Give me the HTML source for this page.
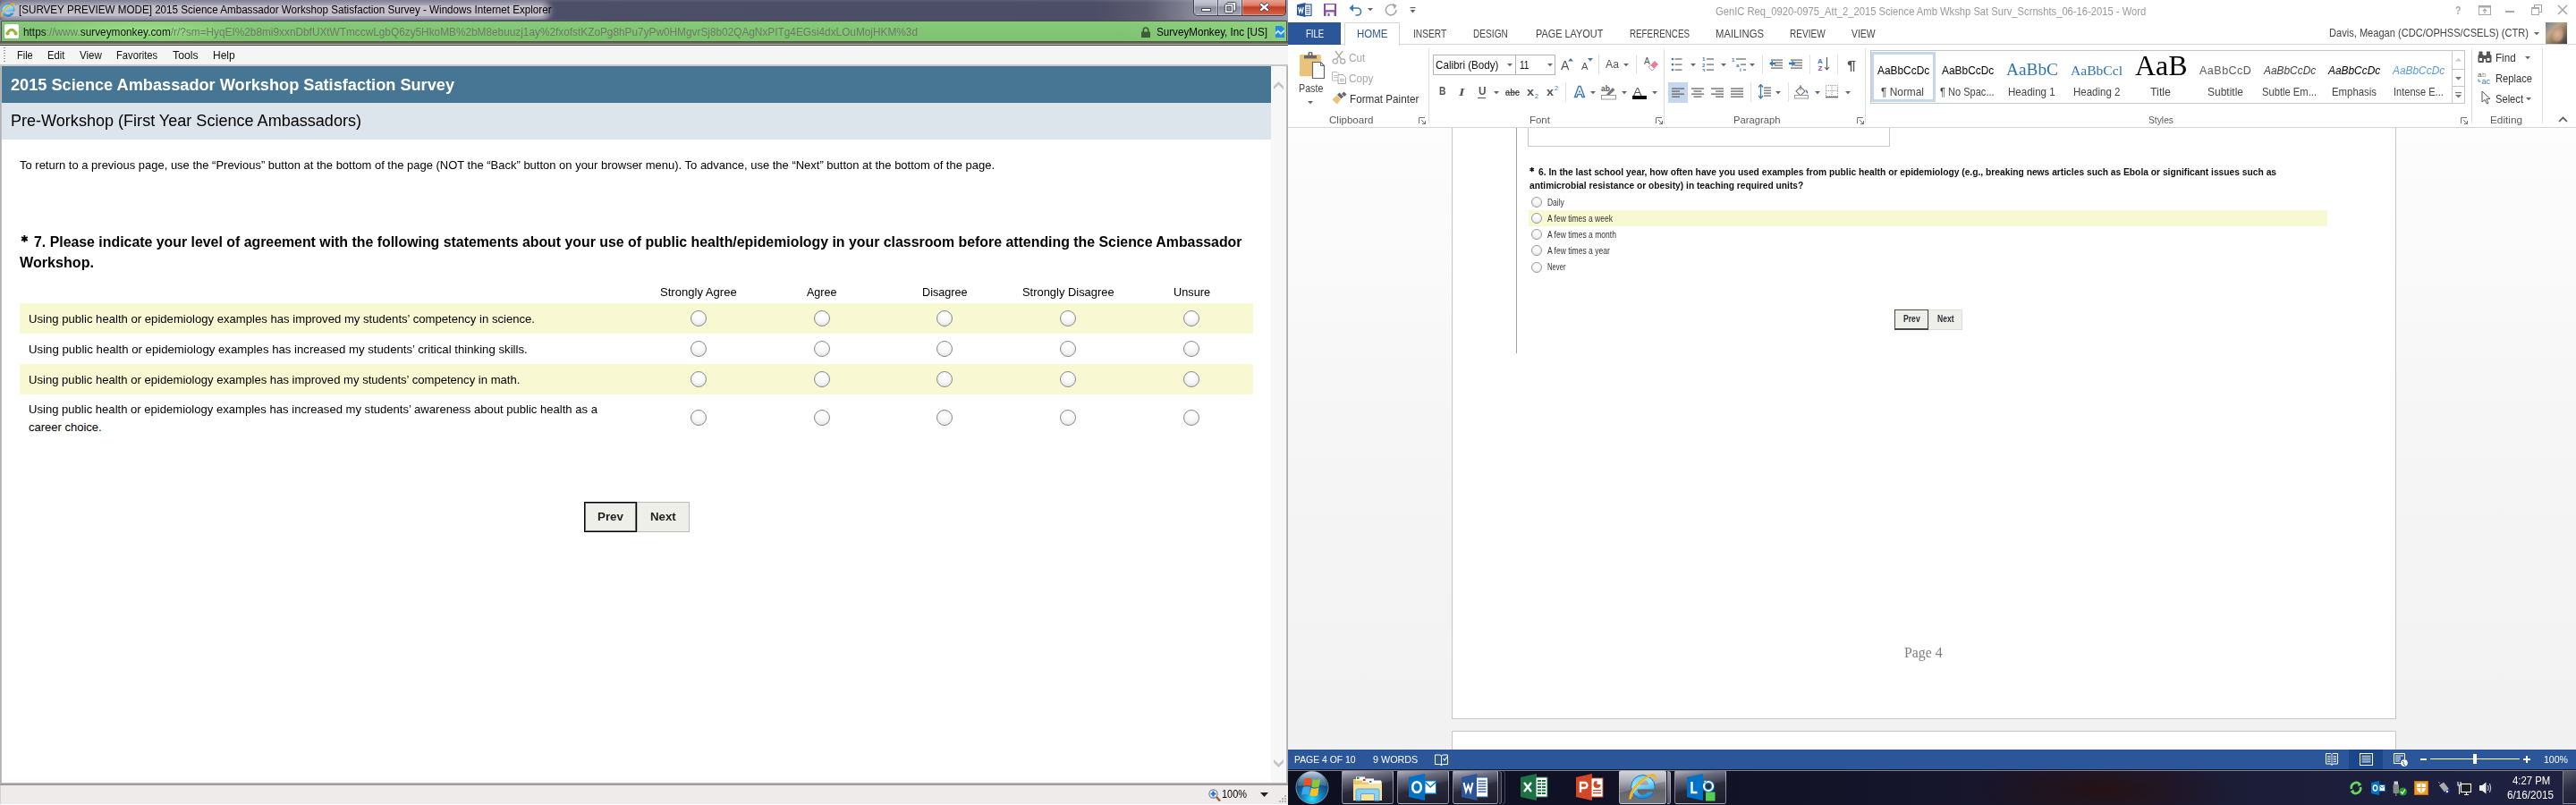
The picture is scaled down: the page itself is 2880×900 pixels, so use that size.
<!DOCTYPE html>
<html><head><meta charset="utf-8">
<style>
*{box-sizing:border-box}
html,body{margin:0;padding:0}
body{width:2880px;height:900px;position:relative;overflow:hidden;background:#fff;font-family:"Liberation Sans",sans-serif;color:#000}
.a{position:absolute}
.t{position:absolute;white-space:pre;line-height:1}

</style></head>
<body>
<div class="a" style="left:0px;top:0px;width:1440px;height:900px;background:#fff"></div>
<div class="a" style="left:0px;top:0px;width:1440px;height:24px;background:linear-gradient(90deg,#4d4e67 0,#4c4d66 85%,#5a5b70 89%,#8c8c9c 93%,#9a9aa8 100%)"></div>
<div class="a" style="left:0px;top:0px;width:1440px;height:3px;background:linear-gradient(180deg,rgba(255,255,255,0.10),rgba(255,255,255,0))"></div>
<div class="a" style="left:2px;top:6px;width:608px;height:12px;background:#c3c0ca;border-radius:6px;box-shadow:0 0 7px 5px #b3b0c0"></div>
<svg class="a" style="left:0px;top:3px;" width="17" height="17" viewBox="0 0 32 32"><defs><linearGradient id="ieti" x1="0" y1="0" x2="0.3" y2="1"><stop offset="0" stop-color="#5cc8f5"/><stop offset="0.45" stop-color="#8fe6ff"/><stop offset="1" stop-color="#1e8ed8"/></linearGradient>
<mask id="ietim"><rect width="32" height="32" fill="#fff"/><path d="M10.6 13.4 A6.3 5.8 0 0 1 23.2 13.4Z" fill="#000"/><path d="M10.6 18.3 H32 V21.6 H22.5 A6.3 5.2 0 0 1 10.6 18.3Z" fill="#000"/></mask></defs>
<g mask="url(#ietim)"><circle cx="16.9" cy="15.8" r="13.2" fill="url(#ieti)" stroke="#1669b8" stroke-width="0.9"/></g>
<path d="M2.8 29.5 C1.5 23 11 9.5 23.5 3.6 C28 1.5 31.5 1.8 29.6 7.2" fill="none" stroke="#f6b31b" stroke-width="2.6"/>
<path d="M4.5 27 C5 22 12 12 22 6" fill="none" stroke="#ffe27a" stroke-width="0.9" opacity="0.8"/></svg>
<div class="t" style="left:21.00px;top:5.42px;font-family:'Liberation Sans';font-size:12.5px;color:#000;font-weight:normal;transform:scaleX(0.9307);transform-origin:0 0;">[SURVEY PREVIEW MODE] 2015 Science Ambassador Workshop Satisfaction Survey - Windows Internet Explorer</div>
<div class="a" style="left:1334px;top:-3px;width:104px;height:21px;border:1px solid #3c3e52;border-top:none;border-radius:0 0 5px 5px;overflow:hidden;background:#555">
    <div class="a" style="left:0;top:0;width:27px;height:20px;background:linear-gradient(180deg,#cfd0da 0,#b4b5c4 45%,#8c8e9f 55%,#a4a6b4 100%);border-right:1px solid #4a4c5e;box-shadow:inset 0 0 0 1px rgba(255,255,255,0.35)"></div>
    <div class="a" style="left:27px;top:0;width:27px;height:20px;background:linear-gradient(180deg,#cfd0da 0,#b4b5c4 45%,#8c8e9f 55%,#a4a6b4 100%);border-right:1px solid #4a4c5e;box-shadow:inset 0 0 0 1px rgba(255,255,255,0.35)"></div>
    <div class="a" style="left:54px;top:0;width:49px;height:20px;background:linear-gradient(180deg,#eeb2a4 0,#dd7c67 45%,#c23d22 55%,#d5674b 100%);box-shadow:inset 0 0 0 1px rgba(255,255,255,0.3)"></div>
    </div>
<div class="a" style="left:1343px;top:9px;width:11px;height:4px;background:#fff;border:1px solid #4a4a58"></div>
<svg class="a" style="left:1368px;top:1px;" width="15" height="15" viewBox="0 0 15 15"><rect x="3.8" y="1.5" width="10" height="9.5" rx="1" fill="#fff" stroke="#3e4256" stroke-width="1"/><rect x="1.3" y="3.8" width="9.5" height="9.8" rx="1" fill="#fafafa" stroke="#3e4256" stroke-width="1"/><rect x="3.9" y="6.4" width="4.3" height="4.5" fill="#a09a9a" stroke="#3e4256" stroke-width="1"/></svg>
<svg class="a" style="left:1407px;top:2px;" width="13" height="12" viewBox="0 0 13 12"><path d="M2 2 L11 10 M11 2 L2 10" stroke="#3e4256" stroke-width="4"/><path d="M2.3 2.3 L10.7 9.7 M10.7 2.3 L2.3 9.7" stroke="#fff" stroke-width="2.4"/></svg>
<div class="a" style="left:0px;top:22px;width:1440px;height:28px;background:linear-gradient(90deg,#8e8c9c 0,#6d6c80 25%,#4a4b63 50%,#4a4b63 85%,#8d8e9e 100%)"></div>
<div class="a" style="left:1px;top:23px;width:1438px;height:24px;background:#566050;border:1px solid #4a5248;border-radius:1px"></div>
<div class="a" style="left:2px;top:24px;width:1436px;height:22px;background:linear-gradient(180deg,#86c978 0,#7ec270 100%)"></div>
<div class="a" style="left:40px;top:24px;width:240px;height:22px;background:radial-gradient(ellipse 120px 16px at 50% 50%,rgba(160,225,140,0.9),rgba(160,225,140,0))"></div>
<div class="a" style="left:1250px;top:24px;width:188px;height:22px;background:linear-gradient(90deg,rgba(150,215,130,0) 0,rgba(150,215,130,0.6) 100%)"></div>
<div class="a" style="left:0px;top:46px;width:1440px;height:3px;background:linear-gradient(180deg,#4a5042 0,#5e6252 40%,#6a6c5c 100%)"></div>
<div class="a" style="left:0px;top:49px;width:1440px;height:1px;background:#bdbdb5"></div>
<div class="a" style="left:0px;top:50px;width:1440px;height:1px;background:#3a3a3a"></div>
<div class="a" style="left:5px;top:27px;width:16px;height:16px;background:#fff;border-radius:2px;box-shadow:0 0 1px #999"></div>
<svg class="a" style="left:6px;top:29px;" width="14" height="12" viewBox="0 0 14 12"><path d="M2 8.5 Q7 0 12 8.5" fill="none" stroke="#98b43a" stroke-width="2.8"/><circle cx="2.4" cy="8.6" r="2" fill="#98b43a"/><circle cx="11.6" cy="8.6" r="2" fill="#98b43a"/></svg>
<div class="t" style="left:26.00px;top:30.32px;font-family:'Liberation Sans';font-size:12.5px;color:#6b7a66;font-weight:normal;transform:scaleX(0.9462);transform-origin:0 0;"><span style="color:#111">https</span>://www.<span style="color:#111">surveymonkey.com</span>/r/?sm=HyqEI%2b8mi9xxnDbfUXtWTmccwLgbQ6zy5HkoMB%2bM8ebuuzj1ay%2fxofstKZoPg8hPu7yPw0HMgvrSj8b02QAgNxPITg4EGsi4dxLOuMojHKM%3d</div>
<svg class="a" style="left:1276px;top:30px;" width="10" height="12" viewBox="0 0 10 12"><path d="M2.3 6 V3.7 A2.7 2.7 0 0 1 7.7 3.7 V6" fill="none" stroke="#3e5c38" stroke-width="1.7"/><rect x="0" y="5.5" width="10" height="6.5" fill="#3e5c38"/></svg>
<div class="t" style="left:1293.00px;top:30.32px;font-family:'Liberation Sans';font-size:12.5px;color:#000;font-weight:normal;transform:scaleX(0.9312);transform-origin:0 0;">SurveyMonkey, Inc [US]</div>
<svg class="a" style="left:1426px;top:29px;" width="10" height="13" viewBox="0 0 10 13"><path d="M0 0 H7 L10 3 V13 H0 Z" fill="#2a8ae0"/><path d="M0 7 L3 4.5 L6 7.5 L10 4 V6.5 L6 10 L3 7 L0 9.5Z" fill="#cfe8ff"/></svg>
<div class="a" style="left:0px;top:51px;width:1440px;height:22px;background:#f5f5f5"></div>
<div class="a" style="left:0px;top:72px;width:1440px;height:2px;background:#c8c8c8"></div>
<div class="a" style="left:4px;top:53px;width:2px;height:18px;background:repeating-linear-gradient(180deg,#9a9a9a 0,#9a9a9a 1px,transparent 1px,transparent 3px)"></div>
<div class="t" style="left:19.30px;top:55.84px;font-family:'Liberation Sans';font-size:12px;color:#111;font-weight:normal;transform:scaleX(0.9150);transform-origin:0 0;">File</div>
<div class="t" style="left:53.40px;top:55.84px;font-family:'Liberation Sans';font-size:12px;color:#111;font-weight:normal;transform:scaleX(0.9329);transform-origin:0 0;">Edit</div>
<div class="t" style="left:88.80px;top:55.84px;font-family:'Liberation Sans';font-size:12px;color:#111;font-weight:normal;transform:scaleX(0.9652);transform-origin:0 0;">View</div>
<div class="t" style="left:130.40px;top:55.84px;font-family:'Liberation Sans';font-size:12px;color:#111;font-weight:normal;transform:scaleX(0.9360);transform-origin:0 0;">Favorites</div>
<div class="t" style="left:193.00px;top:55.84px;font-family:'Liberation Sans';font-size:12px;color:#111;font-weight:normal;transform:scaleX(1.0244);transform-origin:0 0;">Tools</div>
<div class="t" style="left:238.00px;top:55.84px;font-family:'Liberation Sans';font-size:12px;color:#111;font-weight:normal;transform:scaleX(1.0005);transform-origin:0 0;">Help</div>
<div class="a" style="left:0px;top:74px;width:2px;height:804px;background:linear-gradient(90deg,#a9a9a9,#c7c7c7)"></div>
<div class="a" style="left:1438px;top:74px;width:2px;height:804px;background:linear-gradient(90deg,#c7c7c7,#a9a9a9)"></div>
<div class="a" style="left:0px;top:875px;width:1440px;height:3px;background:linear-gradient(180deg,#c0c0c0,#8e8e8e)"></div>
<div class="a" style="left:1421px;top:74px;width:17px;height:801px;background:#f7f7f7"></div>
<svg class="a" style="left:1424px;top:91px;" width="11" height="9" viewBox="0 0 11 9"><path d="M5.5 0 L11 5.5 V9 L5.5 3.8 L0 9 V5.5Z" fill="#c4c4c4"/></svg>
<svg class="a" style="left:1424px;top:849px;" width="11" height="9" viewBox="0 0 11 9"><path d="M5.5 9 L11 3.5 V0 L5.5 5.2 L0 0 V3.5Z" fill="#c4c4c4"/></svg>
<div class="a" style="left:2px;top:74px;width:1419px;height:41px;background:#467694"></div>
<div class="t" style="left:12.00px;top:85.76px;font-family:'Liberation Sans';font-size:18px;color:#fff;font-weight:bold;transform:scaleX(1.0098);transform-origin:0 0;">2015 Science Ambassador Workshop Satisfaction Survey</div>
<div class="a" style="left:2px;top:115px;width:1419px;height:41px;background:#dce5eb"></div>
<div class="t" style="left:12.00px;top:126.26px;font-family:'Liberation Sans';font-size:18px;color:#000;font-weight:normal;transform:scaleX(1.0030);transform-origin:0 0;">Pre-Workshop (First Year Science Ambassadors)</div>
<div class="t" style="left:22.00px;top:178.00px;font-family:'Liberation Sans';font-size:13px;color:#000;font-weight:normal;transform:scaleX(0.9987);transform-origin:0 0;">To return to a previous page, use the “Previous” button at the bottom of the page (NOT the “Back” button on your browser menu). To advance, use the “Next” button at the bottom of the page.</div>
<svg class="a" style="left:20px;top:260px;" width="16" height="14" viewBox="0 0 16 14"><path d="M7.40 3.00 L7.40 10.80 M4.02 4.95 L10.78 8.85 M10.78 4.95 L4.02 8.85 " stroke="#000" stroke-width="1.9"/></svg>
<div class="t" style="left:38.30px;top:262.66px;font-family:'Liberation Sans';font-size:16px;color:#000;font-weight:bold;transform:scaleX(0.9919);transform-origin:0 0;">7. Please indicate your level of agreement with the following statements about your use of public health/epidemiology in your classroom before attending the Science Ambassador</div>
<div class="t" style="left:22.00px;top:286.46px;font-family:'Liberation Sans';font-size:16px;color:#000;font-weight:bold;transform:scaleX(1.0076);transform-origin:0 0;">Workshop.</div>
<div class="t" style="left:738.00px;top:320.00px;font-family:'Liberation Sans';font-size:13px;color:#000;font-weight:normal;transform:scaleX(1.0049);transform-origin:0 0;">Strongly Agree</div>
<div class="t" style="left:902.00px;top:320.00px;font-family:'Liberation Sans';font-size:13px;color:#000;font-weight:normal;transform:scaleX(0.9653);transform-origin:0 0;">Agree</div>
<div class="t" style="left:1031.00px;top:320.00px;font-family:'Liberation Sans';font-size:13px;color:#000;font-weight:normal;transform:scaleX(0.9725);transform-origin:0 0;">Disagree</div>
<div class="t" style="left:1143.00px;top:320.00px;font-family:'Liberation Sans';font-size:13px;color:#000;font-weight:normal;transform:scaleX(0.9930);transform-origin:0 0;">Strongly Disagree</div>
<div class="t" style="left:1311.80px;top:320.00px;font-family:'Liberation Sans';font-size:13px;color:#000;font-weight:normal;transform:scaleX(0.9828);transform-origin:0 0;">Unsure</div>
<div class="a" style="left:22px;top:339px;width:1379px;height:34px;background:#f8f8d2"></div>
<div class="a" style="left:22px;top:407px;width:1379px;height:34px;background:#f8f8d2"></div>
<div class="t" style="left:32.00px;top:350.00px;font-family:'Liberation Sans';font-size:13px;color:#000;font-weight:normal;transform:scaleX(1.0090);transform-origin:0 0;">Using public health or epidemiology examples has improved my students’ competency in science.</div>
<div class="t" style="left:32.00px;top:384.00px;font-family:'Liberation Sans';font-size:13px;color:#000;font-weight:normal;transform:scaleX(1.0151);transform-origin:0 0;">Using public health or epidemiology examples has increased my students’ critical thinking skills.</div>
<div class="t" style="left:32.00px;top:418.00px;font-family:'Liberation Sans';font-size:13px;color:#000;font-weight:normal;transform:scaleX(1.0066);transform-origin:0 0;">Using public health or epidemiology examples has improved my students’ competency in math.</div>
<div class="t" style="left:32.00px;top:450.70px;font-family:'Liberation Sans';font-size:13px;color:#000;font-weight:normal;transform:scaleX(1.0054);transform-origin:0 0;">Using public health or epidemiology examples has increased my students’ awareness about public health as a</div>
<div class="t" style="left:32.00px;top:471.00px;font-family:'Liberation Sans';font-size:13px;color:#000;font-weight:normal;">career choice.</div>
<div class="a" style="left:772px;top:347px;width:18px;height:18px;border-radius:50%;border:1px solid #8a8a8a;background:radial-gradient(circle at 50% 30%,#fff 0,#f7f7f7 50%,#d9d9d9 100%)"></div>
<div class="a" style="left:910px;top:347px;width:18px;height:18px;border-radius:50%;border:1px solid #8a8a8a;background:radial-gradient(circle at 50% 30%,#fff 0,#f7f7f7 50%,#d9d9d9 100%)"></div>
<div class="a" style="left:1047px;top:347px;width:18px;height:18px;border-radius:50%;border:1px solid #8a8a8a;background:radial-gradient(circle at 50% 30%,#fff 0,#f7f7f7 50%,#d9d9d9 100%)"></div>
<div class="a" style="left:1185px;top:347px;width:18px;height:18px;border-radius:50%;border:1px solid #8a8a8a;background:radial-gradient(circle at 50% 30%,#fff 0,#f7f7f7 50%,#d9d9d9 100%)"></div>
<div class="a" style="left:1323px;top:347px;width:18px;height:18px;border-radius:50%;border:1px solid #8a8a8a;background:radial-gradient(circle at 50% 30%,#fff 0,#f7f7f7 50%,#d9d9d9 100%)"></div>
<div class="a" style="left:772px;top:381px;width:18px;height:18px;border-radius:50%;border:1px solid #8a8a8a;background:radial-gradient(circle at 50% 30%,#fff 0,#f7f7f7 50%,#d9d9d9 100%)"></div>
<div class="a" style="left:910px;top:381px;width:18px;height:18px;border-radius:50%;border:1px solid #8a8a8a;background:radial-gradient(circle at 50% 30%,#fff 0,#f7f7f7 50%,#d9d9d9 100%)"></div>
<div class="a" style="left:1047px;top:381px;width:18px;height:18px;border-radius:50%;border:1px solid #8a8a8a;background:radial-gradient(circle at 50% 30%,#fff 0,#f7f7f7 50%,#d9d9d9 100%)"></div>
<div class="a" style="left:1185px;top:381px;width:18px;height:18px;border-radius:50%;border:1px solid #8a8a8a;background:radial-gradient(circle at 50% 30%,#fff 0,#f7f7f7 50%,#d9d9d9 100%)"></div>
<div class="a" style="left:1323px;top:381px;width:18px;height:18px;border-radius:50%;border:1px solid #8a8a8a;background:radial-gradient(circle at 50% 30%,#fff 0,#f7f7f7 50%,#d9d9d9 100%)"></div>
<div class="a" style="left:772px;top:415px;width:18px;height:18px;border-radius:50%;border:1px solid #8a8a8a;background:radial-gradient(circle at 50% 30%,#fff 0,#f7f7f7 50%,#d9d9d9 100%)"></div>
<div class="a" style="left:910px;top:415px;width:18px;height:18px;border-radius:50%;border:1px solid #8a8a8a;background:radial-gradient(circle at 50% 30%,#fff 0,#f7f7f7 50%,#d9d9d9 100%)"></div>
<div class="a" style="left:1047px;top:415px;width:18px;height:18px;border-radius:50%;border:1px solid #8a8a8a;background:radial-gradient(circle at 50% 30%,#fff 0,#f7f7f7 50%,#d9d9d9 100%)"></div>
<div class="a" style="left:1185px;top:415px;width:18px;height:18px;border-radius:50%;border:1px solid #8a8a8a;background:radial-gradient(circle at 50% 30%,#fff 0,#f7f7f7 50%,#d9d9d9 100%)"></div>
<div class="a" style="left:1323px;top:415px;width:18px;height:18px;border-radius:50%;border:1px solid #8a8a8a;background:radial-gradient(circle at 50% 30%,#fff 0,#f7f7f7 50%,#d9d9d9 100%)"></div>
<div class="a" style="left:772px;top:458px;width:18px;height:18px;border-radius:50%;border:1px solid #8a8a8a;background:radial-gradient(circle at 50% 30%,#fff 0,#f7f7f7 50%,#d9d9d9 100%)"></div>
<div class="a" style="left:910px;top:458px;width:18px;height:18px;border-radius:50%;border:1px solid #8a8a8a;background:radial-gradient(circle at 50% 30%,#fff 0,#f7f7f7 50%,#d9d9d9 100%)"></div>
<div class="a" style="left:1047px;top:458px;width:18px;height:18px;border-radius:50%;border:1px solid #8a8a8a;background:radial-gradient(circle at 50% 30%,#fff 0,#f7f7f7 50%,#d9d9d9 100%)"></div>
<div class="a" style="left:1185px;top:458px;width:18px;height:18px;border-radius:50%;border:1px solid #8a8a8a;background:radial-gradient(circle at 50% 30%,#fff 0,#f7f7f7 50%,#d9d9d9 100%)"></div>
<div class="a" style="left:1323px;top:458px;width:18px;height:18px;border-radius:50%;border:1px solid #8a8a8a;background:radial-gradient(circle at 50% 30%,#fff 0,#f7f7f7 50%,#d9d9d9 100%)"></div>
<div class="a" style="left:653px;top:561px;width:59px;height:34px;background:#efefea;border:1px solid #000;box-shadow:inset 0 0 0 1px rgba(0,0,0,0.55)"></div>
<div class="t" style="left:668.00px;top:571.00px;font-family:'Liberation Sans';font-size:13px;color:#222;font-weight:bold;transform:scaleX(1.0283);transform-origin:0 0;">Prev</div>
<div class="a" style="left:712px;top:561px;width:59px;height:34px;background:#efefea;border:1px solid #bdbdbd"></div>
<div class="t" style="left:727.40px;top:571.00px;font-family:'Liberation Sans';font-size:13px;color:#222;font-weight:bold;transform:scaleX(1.0182);transform-origin:0 0;">Next</div>
<div class="a" style="left:0px;top:878px;width:1440px;height:22px;background:#efebea"></div>
<div class="a" style="left:0px;top:878px;width:1px;height:22px;background:#d0d0d0"></div>
<svg class="a" style="left:1351px;top:882px;" width="14" height="15" viewBox="0 0 14 15"><circle cx="5.5" cy="5.5" r="4.6" fill="#f4f8ff" stroke="#6a7a8c" stroke-width="1.1"/><path d="M5.5 2.6 V8.4 M2.6 5.5 H8.4" stroke="#1a6fd8" stroke-width="2.2"/><path d="M9 9 L13 13.5" stroke="#9a5a26" stroke-width="2.4"/></svg>
<div class="t" style="left:1365.70px;top:882.44px;font-family:'Liberation Sans';font-size:12px;color:#000;font-weight:normal;transform:scaleX(0.9120);transform-origin:0 0;">100%</div>
<svg class="a" style="left:1409px;top:886px;" width="9" height="5" viewBox="0 0 9 5"><path d="M0 0 H9 L4.5 5Z" fill="#222"/></svg>
<svg class="a" style="left:1430px;top:889px;" width="9" height="9" viewBox="0 0 9 9"><g fill="#b8b4b4"><rect x="6" y="0" width="2" height="2"/><rect x="3" y="3" width="2" height="2"/><rect x="6" y="3" width="2" height="2"/><rect x="0" y="6" width="2" height="2"/><rect x="3" y="6" width="2" height="2"/><rect x="6" y="6" width="2" height="2"/></g></svg>
<div class="a" style="left:0px;top:899px;width:1440px;height:1px;background:#fff"></div>
<div class="a" style="left:1440px;top:0px;width:1440px;height:860px;background:#fff"></div>
<svg class="a" style="left:1450px;top:3px;" width="17" height="17" viewBox="0 0 17 17"><path d="M0 2.2 L9.5 0 V16 L0 14Z" fill="#2b579a"/>
      <rect x="8.5" y="2" width="7.5" height="12.5" fill="#fff" stroke="#2b579a" stroke-width="1.2"/>
      <rect x="10.3" y="4.6" width="4" height="1" fill="#2b579a"/><rect x="10.3" y="6.8" width="4" height="1" fill="#2b579a"/><rect x="10.3" y="9" width="4" height="1" fill="#2b579a"/><rect x="10.3" y="11.2" width="4" height="1" fill="#2b579a"/>
      <path d="M1.6 5 L2.8 11 L4.3 6.5 L5.8 11 L7.2 5" fill="none" stroke="#fff" stroke-width="1.2"/></svg>
<svg class="a" style="left:1480px;top:4px;" width="14" height="14" viewBox="0 0 14 14"><rect x="0" y="0" width="14" height="14" fill="#8a4bad"/><rect x="2" y="1.2" width="10" height="6" fill="#fff"/><rect x="2.5" y="9.5" width="9" height="4.5" fill="#fff"/><rect x="4.5" y="11" width="2" height="3" fill="#8a4bad"/></svg>
<svg class="a" style="left:1508px;top:3px;" width="16" height="15" viewBox="0 0 16 15"><path d="M3 6 H9.5 A4 4 0 0 1 9.5 14 H7.5" fill="none" stroke="#3b78b5" stroke-width="1.6"/><path d="M0.5 6 L5 1.8 V10.2Z" fill="#3b78b5"/></svg>
<svg class="a" style="left:1529px;top:9px;" width="6" height="4" viewBox="0 0 6 4"><path d="M0 0 H6 L3 3.2Z" fill="#666"/></svg>
<svg class="a" style="left:1548px;top:3px;" width="15" height="15" viewBox="0 0 15 15"><path d="M11.5 4.2 A5.8 5.8 0 1 0 13 8" fill="none" stroke="#a7a7a7" stroke-width="1.6"/><path d="M8.8 0.5 L13.5 3 L10.8 7.5Z" fill="#a7a7a7"/></svg>
<svg class="a" style="left:1576px;top:8px;" width="7" height="8" viewBox="0 0 7 8"><rect x="0.5" y="0" width="6" height="1.2" fill="#666"/><path d="M0.5 3 H6.5 L3.5 6.5Z" fill="#666"/></svg>
<div class="t" style="left:1918.30px;top:6.67px;font-family:'Liberation Sans';font-size:12.2px;color:#9a9a9a;font-weight:normal;transform:scaleX(0.9193);transform-origin:0 0;">GenIC Req_0920-0975_Att_2_2015 Science Amb Wkshp Sat Surv_Scrnshts_06-16-2015 - Word</div>
<div class="t" style="left:2745.00px;top:5.84px;font-family:'Liberation Sans';font-size:12px;color:#a8a8a8;font-weight:bold;transform:scaleX(0.8851);transform-origin:0 0;">?</div>
<svg class="a" style="left:2771px;top:6px;" width="14" height="11" viewBox="0 0 14 11"><rect x="0.5" y="0.5" width="13" height="10" fill="none" stroke="#a8a8a8"/><rect x="0.5" y="0.5" width="13" height="2" fill="#a8a8a8"/><path d="M7 9 V4.5 M4.8 6.5 L7 4.3 L9.2 6.5" fill="none" stroke="#a8a8a8" stroke-width="1.1"/></svg>
<div class="a" style="left:2801px;top:12px;width:10px;height:2px;background:#a8a8a8"></div>
<svg class="a" style="left:2830px;top:5px;" width="12" height="12" viewBox="0 0 12 12"><rect x="3.5" y="0.5" width="8" height="8" fill="none" stroke="#a8a8a8"/><rect x="0.5" y="3.5" width="8" height="8" fill="#fff" stroke="#a8a8a8"/><rect x="0.5" y="3.5" width="8" height="1.5" fill="#a8a8a8"/></svg>
<svg class="a" style="left:2859px;top:5px;" width="12" height="12" viewBox="0 0 12 12"><path d="M1 1 L11 11 M11 1 L1 11" stroke="#a8a8a8" stroke-width="1.6"/></svg>
<div class="a" style="left:1440px;top:25px;width:59px;height:25px;background:#2b579a"></div>
<div class="t" style="left:1459.70px;top:31.52px;font-family:'Liberation Sans';font-size:12.5px;color:#fff;font-weight:normal;transform:scaleX(0.7650);transform-origin:0 0;">FILE</div>
<div class="a" style="left:1503px;top:25px;width:62px;height:26px;border:1px solid #d5d5d5;border-bottom:none;background:#fff"></div>
<div class="a" style="left:1499px;top:49px;width:4px;height:1px;background:#d5d5d5"></div>
<div class="a" style="left:1564px;top:49px;width:1316px;height:1px;background:#d5d5d5"></div>
<div class="t" style="left:1516.70px;top:31.52px;font-family:'Liberation Sans';font-size:12.5px;color:#2b579a;font-weight:normal;transform:scaleX(0.9147);transform-origin:0 0;">HOME</div>
<div class="t" style="left:1579.70px;top:31.52px;font-family:'Liberation Sans';font-size:12.5px;color:#444;font-weight:normal;transform:scaleX(0.8175);transform-origin:0 0;">INSERT</div>
<div class="t" style="left:1647.40px;top:31.52px;font-family:'Liberation Sans';font-size:12.5px;color:#444;font-weight:normal;transform:scaleX(0.8115);transform-origin:0 0;">DESIGN</div>
<div class="t" style="left:1716.70px;top:31.52px;font-family:'Liberation Sans';font-size:12.5px;color:#444;font-weight:normal;transform:scaleX(0.8718);transform-origin:0 0;">PAGE LAYOUT</div>
<div class="t" style="left:1822.00px;top:31.52px;font-family:'Liberation Sans';font-size:12.5px;color:#444;font-weight:normal;transform:scaleX(0.7842);transform-origin:0 0;">REFERENCES</div>
<div class="t" style="left:1918.00px;top:31.52px;font-family:'Liberation Sans';font-size:12.5px;color:#444;font-weight:normal;transform:scaleX(0.9038);transform-origin:0 0;">MAILINGS</div>
<div class="t" style="left:2001.00px;top:31.52px;font-family:'Liberation Sans';font-size:12.5px;color:#444;font-weight:normal;transform:scaleX(0.8051);transform-origin:0 0;">REVIEW</div>
<div class="t" style="left:2070.00px;top:31.52px;font-family:'Liberation Sans';font-size:12.5px;color:#444;font-weight:normal;transform:scaleX(0.8325);transform-origin:0 0;">VIEW</div>
<div class="t" style="left:2603.60px;top:30.67px;font-family:'Liberation Sans';font-size:12.2px;color:#444;font-weight:normal;transform:scaleX(0.9096);transform-origin:0 0;">Davis, Meagan (CDC/OPHSS/CSELS) (CTR)</div>
<svg class="a" style="left:2833px;top:36px;" width="6" height="4" viewBox="0 0 6 4"><path d="M0 0 H6 L3 3.2Z" fill="#666"/></svg>
<div class="a" style="left:2846px;top:25px;width:24px;height:24px;background:radial-gradient(ellipse 8px 10px at 55% 55%,#d9b59b 0,#c49a7e 60%,rgba(0,0,0,0) 100%),linear-gradient(135deg,#6f7f96 0,#b8a98c 35%,#8d7a5e 60%,#3d3a44 100%)"></div>
<div class="a" style="left:1440px;top:142px;width:1440px;height:1px;background:#d5d5d5"></div>
<svg class="a" style="left:1452px;top:57px;" width="30" height="32" viewBox="0 0 30 32"><rect x="1" y="4" width="23.8" height="24.2" rx="1.5" fill="#ebc27a"/>
      <path d="M6 5 H20 V8.5 H6Z" fill="#666"/><rect x="10.5" y="1" width="5" height="5" rx="1.5" fill="#666"/><rect x="12" y="2.5" width="2" height="2" fill="#fff"/>
      <path d="M15.5 12.5 H24.5 L28.5 16.5 V30.5 H15.5Z" fill="#fff" stroke="#666" stroke-width="1.2"/><path d="M24.5 12.5 V16.5 H28.5" fill="none" stroke="#666" stroke-width="1"/></svg>
<div class="t" style="left:1451.60px;top:93.07px;font-family:'Liberation Sans';font-size:12.2px;color:#444;font-weight:normal;transform:scaleX(0.8790);transform-origin:0 0;">Paste</div>
<svg class="a" style="left:1462px;top:113px;" width="6" height="4" viewBox="0 0 6 4"><path d="M0 0 H6 L3 3.2Z" fill="#666"/></svg>
<svg class="a" style="left:1489px;top:56px;" width="16" height="16" viewBox="0 0 16 16"><path d="M4 1 L10.5 10 M12 1 L5.5 10" stroke="#aaa" stroke-width="1.3"/><circle cx="3.8" cy="12.5" r="2.6" fill="none" stroke="#aaa" stroke-width="1.2"/><circle cx="12.2" cy="12.5" r="2.6" fill="none" stroke="#aaa" stroke-width="1.2"/></svg>
<div class="t" style="left:1508.40px;top:59.17px;font-family:'Liberation Sans';font-size:12.2px;color:#a6a6a6;font-weight:normal;transform:scaleX(0.9647);transform-origin:0 0;">Cut</div>
<svg class="a" style="left:1489px;top:80px;" width="16" height="14" viewBox="0 0 16 14"><path d="M0.5 0.5 H6 L8 2.5 V10 H0.5Z" fill="#fff" stroke="#bbb"/><path d="M7 3.5 H12.5 L15.5 6.5 V13.5 H7Z" fill="#fff" stroke="#aaa"/><rect x="2" y="4" width="4" height="0.9" fill="#bbb"/><rect x="2" y="6" width="4" height="0.9" fill="#bbb"/><rect x="9" y="8" width="5" height="0.9" fill="#aaa"/><rect x="9" y="10" width="5" height="0.9" fill="#aaa"/></svg>
<div class="t" style="left:1508.40px;top:81.97px;font-family:'Liberation Sans';font-size:12.2px;color:#a6a6a6;font-weight:normal;transform:scaleX(0.9630);transform-origin:0 0;">Copy</div>
<svg class="a" style="left:1489px;top:103px;" width="17" height="14" viewBox="0 0 17 14"><path d="M0.5 8.5 L5.5 3.5 L10 8 L6 13.5Z" fill="#ebc27a"/><path d="M6 3 L8.5 0.5 L13 5 L10.5 7.5Z" fill="#666"/><path d="M11 2 L13.5 -0.5 L16.5 2.5 L14 5Z" fill="#666"/></svg>
<div class="t" style="left:1508.70px;top:105.07px;font-family:'Liberation Sans';font-size:12.2px;color:#333;font-weight:normal;transform:scaleX(0.9589);transform-origin:0 0;">Format Painter</div>
<div class="t" style="left:1485.80px;top:128.92px;font-family:'Liberation Sans';font-size:11.2px;color:#5b5b5b;font-weight:normal;transform:scaleX(1.0336);transform-origin:0 0;">Clipboard</div>
<svg class="a" style="left:1586px;top:131px;" width="8" height="8" viewBox="0 0 8 8"><path d="M0.5 7 V0.5 H7" fill="none" stroke="#777"/><path d="M3 3 L7.5 7.5 M7.5 4 V7.5 H4" fill="none" stroke="#777"/></svg>
<div class="a" style="left:1597px;top:54px;width:1px;height:84px;background:#e1e1e1"></div>
<div class="a" style="left:1602px;top:61px;width:93px;height:23px;border:1px solid #b4b4b4;background:#fff"></div>
<div class="a" style="left:1695px;top:61px;width:44px;height:23px;border:1px solid #b4b4b4;border-left:none;background:#fff"></div>
<div class="t" style="left:1605.20px;top:67.27px;font-family:'Liberation Sans';font-size:12.2px;color:#111;font-weight:normal;transform:scaleX(0.9549);transform-origin:0 0;">Calibri (Body)</div>
<svg class="a" style="left:1685px;top:71px;" width="6" height="4" viewBox="0 0 6 4"><path d="M0 0 H6 L3 3.2Z" fill="#666"/></svg>
<div class="t" style="left:1698.50px;top:67.27px;font-family:'Liberation Sans';font-size:12.2px;color:#111;font-weight:normal;transform:scaleX(0.8296);transform-origin:0 0;">11</div>
<svg class="a" style="left:1730px;top:71px;" width="6" height="4" viewBox="0 0 6 4"><path d="M0 0 H6 L3 3.2Z" fill="#666"/></svg>
<div class="t" style="left:1745.00px;top:66.15px;font-family:'Liberation Sans';font-size:14px;color:#555;font-weight:normal;transform:scaleX(1.0060);transform-origin:0 0;">A</div>
<svg class="a" style="left:1753px;top:65px;" width="6" height="4" viewBox="0 0 6 4"><path d="M0 3.5 L3 0 L6 3.5Z" fill="#3c78b5"/></svg>
<div class="t" style="left:1768.00px;top:68.69px;font-family:'Liberation Sans';font-size:11px;color:#555;font-weight:normal;transform:scaleX(1.0213);transform-origin:0 0;">A</div>
<svg class="a" style="left:1775px;top:65px;" width="6" height="4" viewBox="0 0 6 4"><path d="M0 0 L3 3.5 L6 0Z" fill="#3c78b5"/></svg>
<div class="a" style="left:1787px;top:61px;width:1px;height:22px;background:#e1e1e1"></div>
<div class="t" style="left:1795.00px;top:65.92px;font-family:'Liberation Sans';font-size:12.5px;color:#555;font-weight:normal;transform:scaleX(0.9806);transform-origin:0 0;">Aa</div>
<svg class="a" style="left:1815px;top:71px;" width="6" height="4" viewBox="0 0 6 4"><path d="M0 0 H6 L3 3.2Z" fill="#666"/></svg>
<div class="a" style="left:1829px;top:61px;width:1px;height:22px;background:#e1e1e1"></div>
<svg class="a" style="left:1838px;top:63px;" width="17" height="17" viewBox="0 0 17 17"><text x="0" y="9" font-family="Liberation Sans" font-size="10" fill="#555">A</text><path d="M5 12 L12 5 L16 9 L9 16Z" fill="#e57f94"/><path d="M5 12 L7.5 9.5 L11.5 13.5 L9 16Z" fill="#fff" stroke="#e57f94" stroke-width="0.8"/></svg>
<div class="t" style="left:1608.60px;top:96.42px;font-family:'Liberation Sans';font-size:12.5px;color:#555;font-weight:bold;transform:scaleX(0.8304);transform-origin:0 0;">B</div>
<div class="t" style="left:1631.00px;top:96.53px;font-family:'Liberation Serif';font-size:12.5px;color:#555;font-weight:bold;font-style:italic;transform:scaleX(1.3333);transform-origin:0 0;">I</div>
<div class="t" style="left:1652.50px;top:96.42px;font-family:'Liberation Sans';font-size:12.5px;color:#555;font-weight:bold;transform:scaleX(0.9412);transform-origin:0 0;">U</div>
<div class="a" style="left:1652px;top:108.5px;width:9px;height:1.3px;background:#555"></div>
<svg class="a" style="left:1670px;top:102px;" width="6" height="4" viewBox="0 0 6 4"><path d="M0 0 H6 L3 3.2Z" fill="#666"/></svg>
<div class="t" style="left:1683.00px;top:97.69px;font-family:'Liberation Sans';font-size:11px;color:#555;font-weight:bold;transform:scaleX(0.8435);transform-origin:0 0;">abc</div>
<div class="a" style="left:1683px;top:103px;width:16px;height:1px;background:#555"></div>
<div class="t" style="left:1707.00px;top:96.00px;font-family:'Liberation Sans';font-size:13px;color:#555;font-weight:bold;transform:scaleX(1.1058);transform-origin:0 0;">x</div>
<div class="t" style="left:1715.50px;top:104.07px;font-family:'Liberation Sans';font-size:7px;color:#3c78b5;font-weight:normal;transform:scaleX(1.0240);transform-origin:0 0;">2</div>
<div class="t" style="left:1729.00px;top:96.00px;font-family:'Liberation Sans';font-size:13px;color:#555;font-weight:bold;transform:scaleX(1.1058);transform-origin:0 0;">x</div>
<div class="t" style="left:1737.50px;top:95.07px;font-family:'Liberation Sans';font-size:7px;color:#3c78b5;font-weight:normal;transform:scaleX(1.0240);transform-origin:0 0;">2</div>
<div class="a" style="left:1750px;top:92px;width:1px;height:22px;background:#e1e1e1"></div>
<svg class="a" style="left:1759px;top:95px;" width="14" height="15" viewBox="0 0 14 15"><path d="M1.5 13.5 L6 1.5 H8 L12.5 13.5 H10 L9 10.5 H5 L4 13.5Z" fill="#fff" stroke="#3c78b5" stroke-width="1.4"/><path d="M5.8 8.4 L7 5 L8.2 8.4Z" fill="#3c78b5"/></svg>
<svg class="a" style="left:1778px;top:102px;" width="6" height="4" viewBox="0 0 6 4"><path d="M0 0 H6 L3 3.2Z" fill="#666"/></svg>
<svg class="a" style="left:1790px;top:94px;" width="18" height="18" viewBox="0 0 18 18"><text x="0" y="8" font-family="Liberation Sans" font-size="8.5" font-weight="bold" fill="#555">ab</text><path d="M5 12.5 L13 4 L15.5 6.5 L7.5 14Z" fill="#777"/><rect x="0.5" y="12.5" width="16" height="4.5" fill="#fff" stroke="#999"/></svg>
<svg class="a" style="left:1813px;top:102px;" width="6" height="4" viewBox="0 0 6 4"><path d="M0 0 H6 L3 3.2Z" fill="#666"/></svg>
<div class="t" style="left:1825.50px;top:95.97px;font-family:'Liberation Sans';font-size:13.5px;color:#555;font-weight:normal;transform:scaleX(1.0537);transform-origin:0 0;">A</div>
<div class="a" style="left:1825px;top:107px;width:16px;height:4px;background:#000"></div>
<svg class="a" style="left:1847px;top:102px;" width="6" height="4" viewBox="0 0 6 4"><path d="M0 0 H6 L3 3.2Z" fill="#666"/></svg>
<div class="a" style="left:1860px;top:54px;width:1px;height:84px;background:#e1e1e1"></div>
<div class="t" style="left:1709.60px;top:128.92px;font-family:'Liberation Sans';font-size:11.2px;color:#5b5b5b;font-weight:normal;transform:scaleX(1.0227);transform-origin:0 0;">Font</div>
<svg class="a" style="left:1851px;top:131px;" width="8" height="8" viewBox="0 0 8 8"><path d="M0.5 7 V0.5 H7" fill="none" stroke="#777"/><path d="M3 3 L7.5 7.5 M7.5 4 V7.5 H4" fill="none" stroke="#777"/></svg>
<svg class="a" style="left:1868px;top:64px;" width="14" height="16" viewBox="0 0 14 16"><circle cx="2" cy="2.0000000000000058" r="1.3" fill="#3c78b5"/><rect x="4.5" y="1.4000000000000057" width="8" height="1.2" fill="#666"/><circle cx="2" cy="8.1" r="1.3" fill="#3c78b5"/><rect x="4.5" y="7.5" width="8" height="1.2" fill="#666"/><circle cx="2" cy="14.1" r="1.3" fill="#3c78b5"/><rect x="4.5" y="13.5" width="8" height="1.2" fill="#666"/></svg>
<svg class="a" style="left:1889.5px;top:71px;" width="6" height="4" viewBox="0 0 6 4"><path d="M0 0 H6 L3 3.2Z" fill="#666"/></svg>
<svg class="a" style="left:1903px;top:64px;" width="14" height="16" viewBox="0 0 14 16"><text x="0" y="4.400000000000006" font-family="Liberation Sans" font-size="6" font-weight="bold" fill="#3c78b5">1</text><rect x="5" y="1.4000000000000057" width="8" height="1.2" fill="#666"/><text x="0" y="10.5" font-family="Liberation Sans" font-size="6" font-weight="bold" fill="#3c78b5">2</text><rect x="5" y="7.5" width="8" height="1.2" fill="#666"/><text x="0" y="16.5" font-family="Liberation Sans" font-size="6" font-weight="bold" fill="#3c78b5">3</text><rect x="5" y="13.5" width="8" height="1.2" fill="#666"/></svg>
<svg class="a" style="left:1923.5px;top:71px;" width="6" height="4" viewBox="0 0 6 4"><path d="M0 0 H6 L3 3.2Z" fill="#666"/></svg>
<svg class="a" style="left:1935.5px;top:64px;" width="17" height="17" viewBox="0 0 17 17"><text x="0" y="4.5" font-family="Liberation Sans" font-size="6" font-weight="bold" fill="#3c78b5">1</text><rect x="5" y="1.4" width="11" height="1.2" fill="#666"/><text x="5" y="10.5" font-family="Liberation Sans" font-size="6" font-weight="bold" fill="#3c78b5">a</text><rect x="10" y="7.5" width="6" height="1.2" fill="#666"/><text x="9" y="16" font-family="Liberation Sans" font-size="6" font-weight="bold" fill="#3c78b5">i</text><rect x="13" y="13.5" width="3" height="1.2" fill="#666"/></svg>
<svg class="a" style="left:1956px;top:71px;" width="6" height="4" viewBox="0 0 6 4"><path d="M0 0 H6 L3 3.2Z" fill="#666"/></svg>
<div class="a" style="left:1970px;top:61px;width:1px;height:22px;background:#e1e1e1"></div>
<svg class="a" style="left:1978px;top:63px;" width="16" height="16" viewBox="0 0 16 16"><rect x="2" y="3.5" width="13" height="1.2" fill="#666"/><rect x="6" y="6.5" width="9" height="1.2" fill="#666"/><rect x="6" y="9.5" width="9" height="1.2" fill="#666"/><rect x="2" y="12.5" width="13" height="1.2" fill="#666"/><path d="M0 8 L4 4.5 V6.8 H7 V9.2 H4 V11.5Z" fill="#3c78b5"/></svg>
<svg class="a" style="left:2000px;top:63px;" width="16" height="16" viewBox="0 0 16 16"><rect x="2" y="3.5" width="13" height="1.2" fill="#666"/><rect x="6" y="6.5" width="9" height="1.2" fill="#666"/><rect x="6" y="9.5" width="9" height="1.2" fill="#666"/><rect x="2" y="12.5" width="13" height="1.2" fill="#666"/><path d="M7.5 8 L3.5 4.5 V6.8 H0 V9.2 H3.5 V11.5Z" fill="#3c78b5"/></svg>
<div class="a" style="left:2023px;top:61px;width:1px;height:22px;background:#e1e1e1"></div>
<svg class="a" style="left:2032px;top:63px;" width="14" height="17" viewBox="0 0 14 17"><text x="0" y="7.5" font-family="Liberation Sans" font-size="8" font-weight="bold" fill="#3c78b5">A</text><text x="0.5" y="15.5" font-family="Liberation Sans" font-size="8" font-weight="bold" fill="#8a4bad">Z</text><path d="M10.5 1 V14.5 M8 12 L10.5 15 L13 12" fill="none" stroke="#555" stroke-width="1.1"/></svg>
<div class="a" style="left:2054px;top:61px;width:1px;height:22px;background:#e1e1e1"></div>
<div class="t" style="left:2064.50px;top:66.15px;font-family:'Liberation Sans';font-size:14px;color:#555;font-weight:bold;transform:scaleX(1.2826);transform-origin:0 0;">¶</div>
<div class="a" style="left:1865px;top:92px;width:22px;height:23px;background:#c5d7ef"></div>
<svg class="a" style="left:1869px;top:96px;" width="15" height="14" viewBox="0 0 15 14"><rect x="0" y="2.4000000000000057" width="14" height="1.3" fill="#666"/><rect x="0" y="5.400000000000006" width="9" height="1.3" fill="#666"/><rect x="0" y="8.5" width="14" height="1.3" fill="#666"/><rect x="0" y="11.5" width="9" height="1.3" fill="#666"/></svg>
<svg class="a" style="left:1891px;top:96px;" width="15" height="14" viewBox="0 0 15 14"><rect x="0" y="2.4000000000000057" width="14" height="1.3" fill="#666"/><rect x="2.5" y="5.400000000000006" width="9.0" height="1.3" fill="#666"/><rect x="0" y="8.5" width="14" height="1.3" fill="#666"/><rect x="2.5" y="11.5" width="9.0" height="1.3" fill="#666"/></svg>
<svg class="a" style="left:1913px;top:96px;" width="15" height="14" viewBox="0 0 15 14"><rect x="0" y="2.4000000000000057" width="14" height="1.3" fill="#666"/><rect x="5" y="5.400000000000006" width="9" height="1.3" fill="#666"/><rect x="0" y="8.5" width="14" height="1.3" fill="#666"/><rect x="5" y="11.5" width="9" height="1.3" fill="#666"/></svg>
<svg class="a" style="left:1935px;top:96px;" width="15" height="14" viewBox="0 0 15 14"><rect x="0" y="2.4000000000000057" width="14" height="1.3" fill="#666"/><rect x="0" y="5.400000000000006" width="14" height="1.3" fill="#666"/><rect x="0" y="8.5" width="14" height="1.3" fill="#666"/><rect x="0" y="11.5" width="14" height="1.3" fill="#666"/></svg>
<div class="a" style="left:1957px;top:92px;width:1px;height:22px;background:#e1e1e1"></div>
<svg class="a" style="left:1966px;top:94px;" width="15" height="18" viewBox="0 0 15 18"><path d="M2.5 1 V15.5" stroke="#3c78b5" stroke-width="1.3"/><path d="M0 3.5 L2.5 0.5 L5 3.5 M0 13 L2.5 16 L5 13" fill="none" stroke="#3c78b5" stroke-width="1.3"/><rect x="6" y="3.5" width="8" height="1.2" fill="#666"/><rect x="6" y="6.5" width="8" height="1.2" fill="#666"/><rect x="6" y="9.5" width="8" height="1.2" fill="#666"/><rect x="6" y="12.5" width="8" height="1.2" fill="#666"/></svg>
<svg class="a" style="left:1985px;top:102px;" width="6" height="4" viewBox="0 0 6 4"><path d="M0 0 H6 L3 3.2Z" fill="#666"/></svg>
<div class="a" style="left:1999px;top:92px;width:1px;height:22px;background:#e1e1e1"></div>
<svg class="a" style="left:2006px;top:94px;" width="18" height="18" viewBox="0 0 18 18"><path d="M2 8 L7 3 L12 8 L7 13Z" fill="#fff" stroke="#777" stroke-width="1.1"/><path d="M7 1 V7" stroke="#777"/><path d="M12.5 6 Q16 8 15 11 Q13.5 10 13 8Z" fill="#3c78b5"/><rect x="0.5" y="12.5" width="15" height="3.5" fill="#fff" stroke="#999"/></svg>
<svg class="a" style="left:2029px;top:102px;" width="6" height="4" viewBox="0 0 6 4"><path d="M0 0 H6 L3 3.2Z" fill="#666"/></svg>
<svg class="a" style="left:2041px;top:95px;" width="15" height="16" viewBox="0 0 15 16"><rect x="0.5" y="0.5" width="13" height="12" fill="none" stroke="#888" stroke-dasharray="1 1.4"/><path d="M7 0.5 V12.5 M0.5 6.5 H13.5" stroke="#888" stroke-dasharray="1 1.4"/><rect x="0" y="13" width="14" height="1.3" fill="#666"/></svg>
<svg class="a" style="left:2063px;top:102px;" width="6" height="4" viewBox="0 0 6 4"><path d="M0 0 H6 L3 3.2Z" fill="#666"/></svg>
<div class="a" style="left:2085px;top:54px;width:1px;height:84px;background:#e1e1e1"></div>
<div class="t" style="left:1938.00px;top:128.92px;font-family:'Liberation Sans';font-size:11.2px;color:#5b5b5b;font-weight:normal;transform:scaleX(1.0029);transform-origin:0 0;">Paragraph</div>
<svg class="a" style="left:2076px;top:131px;" width="8" height="8" viewBox="0 0 8 8"><path d="M0.5 7 V0.5 H7" fill="none" stroke="#777"/><path d="M3 3 L7.5 7.5 M7.5 4 V7.5 H4" fill="none" stroke="#777"/></svg>
<div class="a" style="left:2091px;top:56px;width:665px;height:60px;border:1px solid #c6c6c6;background:#fff"></div>
<div class="a" style="left:2092px;top:58px;width:72px;height:56px;border:3px solid #c5d7ef;background:#fff"></div>
<div class="t" style="left:2098.60px;top:72.72px;font-family:'Liberation Sans';font-size:12.5px;color:#000;font-weight:normal;transform:scaleX(0.9519);transform-origin:0 0;font-family:Liberation Sans">AaBbCcDc</div>
<div class="t" style="left:2103.00px;top:96.67px;font-family:'Liberation Sans';font-size:12.2px;color:#444;font-weight:normal;transform:scaleX(0.9752);transform-origin:0 0;">¶ Normal</div>
<div class="t" style="left:2170.70px;top:72.72px;font-family:'Liberation Sans';font-size:12.5px;color:#000;font-weight:normal;transform:scaleX(0.9535);transform-origin:0 0;">AaBbCcDc</div>
<div class="t" style="left:2169.40px;top:96.67px;font-family:'Liberation Sans';font-size:12.2px;color:#444;font-weight:normal;transform:scaleX(0.9066);transform-origin:0 0;">¶ No Spac...</div>
<div class="t" style="left:2243.00px;top:69.31px;font-family:'Liberation Serif';font-size:18.5px;color:#2e74b5;font-weight:normal;transform:scaleX(1.0450);transform-origin:0 0;">AaBbC</div>
<div class="t" style="left:2245.40px;top:96.67px;font-family:'Liberation Sans';font-size:12.2px;color:#444;font-weight:normal;transform:scaleX(0.9464);transform-origin:0 0;">Heading 1</div>
<div class="t" style="left:2315.00px;top:71.66px;font-family:'Liberation Serif';font-size:14.5px;color:#2e74b5;font-weight:normal;transform:scaleX(1.0747);transform-origin:0 0;">AaBbCcl</div>
<div class="t" style="left:2317.50px;top:96.67px;font-family:'Liberation Sans';font-size:12.2px;color:#444;font-weight:normal;transform:scaleX(0.9446);transform-origin:0 0;">Heading 2</div>
<div class="t" style="left:2387.00px;top:59.26px;font-family:'Liberation Serif';font-size:30.5px;color:#000;font-weight:normal;transform:scaleX(1.0461);transform-origin:0 0;">AaB</div>
<div class="t" style="left:2404.00px;top:96.67px;font-family:'Liberation Sans';font-size:12.2px;color:#444;font-weight:normal;transform:scaleX(1.0187);transform-origin:0 0;">Title</div>
<div class="t" style="left:2458.60px;top:72.72px;font-family:'Liberation Sans';font-size:12.5px;color:#5a5a5a;font-weight:normal;transform:scaleX(1.0002);transform-origin:0 0;letter-spacing:0.5px">AaBbCcD</div>
<div class="t" style="left:2468.00px;top:96.67px;font-family:'Liberation Sans';font-size:12.2px;color:#444;font-weight:normal;transform:scaleX(0.9839);transform-origin:0 0;">Subtitle</div>
<div class="t" style="left:2530.80px;top:72.72px;font-family:'Liberation Sans';font-size:12.5px;color:#404040;font-weight:normal;font-style:italic;transform:scaleX(0.9519);transform-origin:0 0;">AaBbCcDc</div>
<div class="t" style="left:2529.00px;top:96.67px;font-family:'Liberation Sans';font-size:12.2px;color:#444;font-weight:normal;transform:scaleX(0.9188);transform-origin:0 0;">Subtle Em...</div>
<div class="t" style="left:2603.00px;top:72.72px;font-family:'Liberation Sans';font-size:12.5px;color:#000;font-weight:normal;font-style:italic;transform:scaleX(0.9519);transform-origin:0 0;">AaBbCcDc</div>
<div class="t" style="left:2607.00px;top:96.67px;font-family:'Liberation Sans';font-size:12.2px;color:#444;font-weight:normal;transform:scaleX(0.9343);transform-origin:0 0;">Emphasis</div>
<div class="t" style="left:2674.80px;top:72.72px;font-family:'Liberation Sans';font-size:12.5px;color:#5b9bd5;font-weight:normal;font-style:italic;transform:scaleX(0.9519);transform-origin:0 0;">AaBbCcDc</div>
<div class="t" style="left:2675.70px;top:96.67px;font-family:'Liberation Sans';font-size:12.2px;color:#444;font-weight:normal;transform:scaleX(0.9050);transform-origin:0 0;">Intense E...</div>
<div class="a" style="left:2741px;top:56px;width:15px;height:60px;border:1px solid #c6c6c6;background:#fff"></div>
<div class="a" style="left:2741px;top:77px;width:15px;height:1px;background:#c6c6c6"></div>
<div class="a" style="left:2741px;top:96px;width:15px;height:1px;background:#c6c6c6"></div>
<svg class="a" style="left:2745px;top:65px;" width="7" height="4" viewBox="0 0 7 4"><path d="M0 3.5 L3.5 0 L7 3.5Z" fill="#c6c6c6"/></svg>
<svg class="a" style="left:2745px;top:86px;" width="7" height="4" viewBox="0 0 7 4"><path d="M0 0 L3.5 3.5 L7 0Z" fill="#777"/></svg>
<svg class="a" style="left:2745px;top:103px;" width="7" height="7" viewBox="0 0 7 7"><rect x="0" y="0" width="7" height="1.2" fill="#777"/><path d="M0 3 L3.5 6.5 L7 3Z" fill="#777"/></svg>
<div class="t" style="left:2402.00px;top:128.92px;font-family:'Liberation Sans';font-size:11.2px;color:#5b5b5b;font-weight:normal;transform:scaleX(0.9190);transform-origin:0 0;">Styles</div>
<svg class="a" style="left:2751px;top:131px;" width="8" height="8" viewBox="0 0 8 8"><path d="M0.5 7 V0.5 H7" fill="none" stroke="#777"/><path d="M3 3 L7.5 7.5 M7.5 4 V7.5 H4" fill="none" stroke="#777"/></svg>
<div class="a" style="left:2763px;top:54px;width:1px;height:84px;background:#e1e1e1"></div>
<svg class="a" style="left:2770px;top:57px;" width="17" height="14" viewBox="0 0 17 14"><rect x="0.5" y="4" width="6.5" height="9" rx="1.5" fill="#555"/><rect x="9" y="4" width="6.5" height="9" rx="1.5" fill="#555"/><rect x="1.5" y="0.5" width="4" height="5" fill="#555"/><rect x="10" y="0.5" width="4" height="5" fill="#555"/><rect x="6" y="5" width="4" height="4" fill="#555"/><rect x="2" y="8" width="3" height="3" fill="#fff"/><rect x="10.5" y="8" width="3" height="3" fill="#fff"/></svg>
<div class="t" style="left:2790.00px;top:59.37px;font-family:'Liberation Sans';font-size:12.2px;color:#333;font-weight:normal;transform:scaleX(0.9570);transform-origin:0 0;">Find</div>
<svg class="a" style="left:2823px;top:63px;" width="6" height="4" viewBox="0 0 6 4"><path d="M0 0 H6 L3 3.2Z" fill="#666"/></svg>
<svg class="a" style="left:2770px;top:79px;" width="18" height="15" viewBox="0 0 18 15"><text x="0" y="6.5" font-family="Liberation Sans" font-size="8" fill="#555">a</text><text x="5" y="6.5" font-family="Liberation Sans" font-size="8" fill="#999">b</text><text x="4.5" y="14.5" font-family="Liberation Sans" font-size="9" fill="#3c78b5">ac</text><path d="M1 9.5 V12 H3.5" fill="none" stroke="#3c78b5" stroke-width="1"/></svg>
<div class="t" style="left:2790.00px;top:82.27px;font-family:'Liberation Sans';font-size:12.2px;color:#333;font-weight:normal;transform:scaleX(0.9168);transform-origin:0 0;">Replace</div>
<svg class="a" style="left:2774px;top:101px;" width="12" height="16" viewBox="0 0 12 16"><path d="M1 1 V13 L4 10.5 L6.5 15 L8 14 L5.8 9.8 L10 9.5Z" fill="#fff" stroke="#555" stroke-width="1"/></svg>
<div class="t" style="left:2790.00px;top:104.97px;font-family:'Liberation Sans';font-size:12.2px;color:#333;font-weight:normal;transform:scaleX(0.9151);transform-origin:0 0;">Select</div>
<svg class="a" style="left:2824px;top:109px;" width="6" height="4" viewBox="0 0 6 4"><path d="M0 0 H6 L3 3.2Z" fill="#666"/></svg>
<div class="t" style="left:2784.40px;top:128.92px;font-family:'Liberation Sans';font-size:11.2px;color:#5b5b5b;font-weight:normal;transform:scaleX(1.0550);transform-origin:0 0;">Editing</div>
<div class="a" style="left:2842px;top:54px;width:1px;height:84px;background:#e1e1e1"></div>
<svg class="a" style="left:2860px;top:130px;" width="11" height="7" viewBox="0 0 11 7"><path d="M1 6 L5.5 1.5 L10 6" fill="none" stroke="#555" stroke-width="1.6"/></svg>
<div class="a" style="left:1440px;top:143px;width:1440px;height:695px;background:linear-gradient(180deg,#fdfdfd 0,#f7f7f7 40%,#f1f1f1 100%)"></div>
<div class="a" style="left:1623px;top:143px;width:1056px;height:661px;background:#fff;border:1px solid #c6c6c6;border-top:none"></div>
<div class="a" style="left:1623px;top:817px;width:1056px;height:30px;background:#fff;border:1px solid #c6c6c6;border-bottom:none"></div>
<div class="a" style="left:1695px;top:143px;width:1px;height:252px;background:#a0a0a0"></div>
<div class="a" style="left:1708px;top:143px;width:405px;height:21px;border:1px solid #c8c8c8;border-top:none;background:#fff"></div>
<svg class="a" style="left:1705px;top:184px;" width="16" height="12" viewBox="0 0 16 12"><path d="M7.70 3.10 L7.70 8.30 M5.45 4.40 L9.95 7.00 M9.95 4.40 L5.45 7.00 " stroke="#111" stroke-width="1.3"/></svg>
<div class="t" style="left:1719.90px;top:186.81px;font-family:'Liberation Sans';font-size:10.5px;color:#111;font-weight:bold;transform:scaleX(0.9772);transform-origin:0 0;">6. In the last school year, how often have you used examples from public health or epidemiology (e.g., breaking news articles such as Ebola or significant issues such as</div>
<div class="t" style="left:1709.50px;top:202.01px;font-family:'Liberation Sans';font-size:10.5px;color:#111;font-weight:bold;transform:scaleX(0.9739);transform-origin:0 0;">antimicrobial resistance or obesity) in teaching required units?</div>
<div class="a" style="left:1709px;top:235px;width:893px;height:18px;background:#f8f8d2"></div>
<div class="a" style="left:1712px;top:220px;width:12px;height:12px;border-radius:50%;border:1px solid #9a9a9a;background:radial-gradient(circle at 50% 30%,#fff 0,#f5f5f5 50%,#dadada 100%)"></div>
<div class="t" style="left:1730.00px;top:221.73px;font-family:'Liberation Sans';font-size:10px;color:#333;font-weight:normal;transform:scaleX(0.8455);transform-origin:0 0;">Daily</div>
<div class="a" style="left:1712px;top:238px;width:12px;height:12px;border-radius:50%;border:1px solid #9a9a9a;background:radial-gradient(circle at 50% 30%,#fff 0,#f5f5f5 50%,#dadada 100%)"></div>
<div class="t" style="left:1730.00px;top:240.03px;font-family:'Liberation Sans';font-size:10px;color:#333;font-weight:normal;transform:scaleX(0.8529);transform-origin:0 0;">A few times a week</div>
<div class="a" style="left:1712px;top:256px;width:12px;height:12px;border-radius:50%;border:1px solid #9a9a9a;background:radial-gradient(circle at 50% 30%,#fff 0,#f5f5f5 50%,#dadada 100%)"></div>
<div class="t" style="left:1730.00px;top:257.94px;font-family:'Liberation Sans';font-size:10px;color:#333;font-weight:normal;transform:scaleX(0.8540);transform-origin:0 0;">A few times a month</div>
<div class="a" style="left:1712px;top:274px;width:12px;height:12px;border-radius:50%;border:1px solid #9a9a9a;background:radial-gradient(circle at 50% 30%,#fff 0,#f5f5f5 50%,#dadada 100%)"></div>
<div class="t" style="left:1730.00px;top:276.13px;font-family:'Liberation Sans';font-size:10px;color:#333;font-weight:normal;transform:scaleX(0.8555);transform-origin:0 0;">A few times a year</div>
<div class="a" style="left:1712px;top:293px;width:12px;height:12px;border-radius:50%;border:1px solid #9a9a9a;background:radial-gradient(circle at 50% 30%,#fff 0,#f5f5f5 50%,#dadada 100%)"></div>
<div class="t" style="left:1730.00px;top:294.44px;font-family:'Liberation Sans';font-size:10px;color:#333;font-weight:normal;transform:scaleX(0.7681);transform-origin:0 0;">Never</div>
<div class="a" style="left:2156px;top:346px;width:38px;height:23px;background:#efefea;border:1px solid #dcdcdc"></div>
<div class="a" style="left:2118px;top:346px;width:38px;height:23px;background:#efefea;border:1.5px solid #4a4a4a;border-bottom-width:2px"></div>
<div class="t" style="left:2127.70px;top:351.64px;font-family:'Liberation Sans';font-size:10px;color:#2a2a3a;font-weight:bold;transform:scaleX(0.8622);transform-origin:0 0;">Prev</div>
<div class="t" style="left:2165.90px;top:351.64px;font-family:'Liberation Sans';font-size:10px;color:#2a2a3a;font-weight:bold;transform:scaleX(0.8530);transform-origin:0 0;">Next</div>
<div class="t" style="left:2129.00px;top:721.60px;font-family:'Liberation Serif';font-size:16px;color:#7f7f7f;font-weight:normal;transform:scaleX(0.9905);transform-origin:0 0;">Page 4</div>
<div class="a" style="left:1440px;top:838px;width:1440px;height:22px;background:#2b579a"></div>
<div class="t" style="left:1447.00px;top:843.57px;font-family:'Liberation Sans';font-size:11.5px;color:#fff;font-weight:normal;transform:scaleX(0.9030);transform-origin:0 0;">PAGE 4 OF 10</div>
<div class="t" style="left:1534.50px;top:843.57px;font-family:'Liberation Sans';font-size:11.5px;color:#fff;font-weight:normal;transform:scaleX(0.9372);transform-origin:0 0;">9 WORDS</div>
<svg class="a" style="left:1604px;top:843px;" width="16" height="14" viewBox="0 0 16 14"><path d="M0.5 1 H5.5 Q7.5 1 7.5 3 V13 Q7.5 11.5 5.5 11.5 H0.5Z M14.5 1 H9.5 Q7.5 1 7.5 3 V13 Q7.5 11.5 9.5 11.5 H14.5Z" fill="none" stroke="#fff" stroke-width="1"/><path d="M9.5 5 L11 7 L14.5 2.5" fill="none" stroke="#fff" stroke-width="1.1"/></svg>
<svg class="a" style="left:2600px;top:842px;" width="14" height="14" viewBox="0 0 14 14"><path d="M0.5 0.5 H6 L7 1.5 L8 0.5 H13.5 V12 H8 L7 13.5 L6 12 H0.5Z" fill="none" stroke="#fff" stroke-width="1"/><path d="M7 1.5 V13" stroke="#fff" stroke-width="0.8"/><g fill="#fff"><rect x="2" y="3" width="3.5" height="0.9"/><rect x="2" y="5" width="3.5" height="0.9"/><rect x="2" y="7" width="3.5" height="0.9"/><rect x="2" y="9" width="3.5" height="0.9"/><rect x="8.5" y="3" width="3.5" height="0.9"/><rect x="8.5" y="5" width="3.5" height="0.9"/><rect x="8.5" y="7" width="3.5" height="0.9"/><rect x="8.5" y="9" width="3.5" height="0.9"/></g></svg>
<div class="a" style="left:2626px;top:838px;width:38px;height:22px;background:#19478a"></div>
<svg class="a" style="left:2637.5px;top:842px;" width="15" height="14" viewBox="0 0 15 14"><rect x="0.5" y="0.5" width="14" height="13" fill="none" stroke="#fff" stroke-width="1"/><g fill="#fff"><rect x="2.5" y="2.8" width="10" height="1"/><rect x="2.5" y="5" width="10" height="1"/><rect x="2.5" y="7.2" width="10" height="1"/><rect x="2.5" y="9.4" width="10" height="1"/></g></svg>
<svg class="a" style="left:2675.5px;top:842px;" width="16" height="15" viewBox="0 0 16 15"><path d="M9 11.5 H0.5 V0.5 H12.5 V7" fill="none" stroke="#fff" stroke-width="1"/><g fill="#fff"><rect x="2" y="2.5" width="9" height="0.9"/><rect x="2" y="4.5" width="6" height="0.9"/><rect x="2" y="6.5" width="6" height="0.9"/><rect x="2" y="8.5" width="5" height="0.9"/></g><circle cx="12" cy="11" r="3.8" fill="#fff"/><path d="M10 9 Q12 10 11 12 Q12.5 13 13 14" fill="none" stroke="#2b579a" stroke-width="1"/></svg>
<div class="a" style="left:2706px;top:848px;width:7px;height:2px;background:#fff"></div>
<div class="a" style="left:2717px;top:848px;width:100px;height:1px;background:#fff"></div>
<div class="a" style="left:2765px;top:843px;width:4px;height:11px;background:#fff"></div>
<div class="a" style="left:2821px;top:848px;width:8px;height:2px;background:#fff"></div>
<div class="a" style="left:2824px;top:845px;width:2px;height:8px;background:#fff"></div>
<div class="t" style="left:2844.00px;top:843.57px;font-family:'Liberation Sans';font-size:11.5px;color:#fff;font-weight:normal;transform:scaleX(0.9177);transform-origin:0 0;">100%</div>
<div class="a" style="left:1440px;top:860px;width:1440px;height:40px;background:linear-gradient(90deg,#0d0e1e 0,#111226 30%,#17162c 55%,#1b1a33 65%,#1c1f3c 85%,#1e2140 100%)"></div>
<div class="a" style="left:2200px;top:860px;width:300px;height:40px;background:radial-gradient(ellipse 150px 40px at 50% 60%,rgba(40,15,10,0.75) 0,rgba(40,15,10,0) 100%)"></div>
<div class="a" style="left:1440px;top:860px;width:1440px;height:1px;background:#1b1b28"></div>
<div class="a" style="left:1440px;top:861px;width:1440px;height:1px;background:#7c7e90"></div>
<svg class="a" style="left:1448px;top:862px;" width="38" height="37" viewBox="0 0 38 37"><defs><radialGradient id="orb" cx="50%" cy="85%" r="65%"><stop offset="0" stop-color="#22e0ff"/><stop offset="0.45" stop-color="#1680c0"/><stop offset="1" stop-color="#0c3a66"/></radialGradient>
      <linearGradient id="orbh" x1="0" y1="0" x2="0" y2="1"><stop offset="0" stop-color="#d8e8f4" stop-opacity="0.9"/><stop offset="1" stop-color="#7fa8c8" stop-opacity="0.35"/></linearGradient></defs>
      <circle cx="19" cy="18.5" r="18" fill="url(#orb)" stroke="#8a9aa8" stroke-width="0.9"/>
      <path d="M2.5 17 A16.5 16.5 0 0 1 35.5 17 Q19 13 2.5 17Z" fill="url(#orbh)"/>
      <path d="M10.5 8.5 Q14 6.8 18.8 8.6 L17.2 17 Q13 15.2 9 17Z" fill="#f0501c"/>
      <path d="M19.8 9 Q23.5 11 28.5 8.6 L26.7 17.6 Q22.5 19.5 18.2 17.6Z" fill="#8cc63e"/>
      <path d="M8.8 18.2 Q12.6 16.4 17 18.2 L15.3 26.8 Q11.2 25 7 26.8Z" fill="#3ea8ea"/>
      <path d="M18 18.8 Q22 20.8 26.5 18.6 L25.2 27.2 Q20.8 29.4 16.2 27.2Z" fill="#fdc21a"/></svg>
<div class="a" style="left:1500px;top:861px;width:58px;height:38px;border-radius:3px;border:1px solid rgba(200,200,215,0.55);background:linear-gradient(170deg,#b4b4c0 0,#6e6e80 22%,#36364a 50%,#232336 100%);overflow:hidden"><div class="a" style="left:-20px;top:18px;width:98px;height:30px;background:rgba(0,0,0,0.18);transform:rotate(-14deg)"></div></div>
<svg class="a" style="left:1512px;top:867px;" width="34" height="29" viewBox="0 0 34 29"><path d="M1 4 H10 L12 6.5 H33 V28 H1Z" fill="#e9c96a"/>
      <rect x="4" y="1.5" width="10" height="4" fill="#fff"/><rect x="5" y="2" width="2.5" height="2" fill="#2a9a2a"/>
      <rect x="11" y="3.5" width="13" height="4" fill="#fff"/><rect x="12" y="4" width="2.5" height="2" fill="#d22"/>
      <rect x="18" y="5.5" width="14" height="4" fill="#fff"/><rect x="19" y="6" width="2.5" height="2" fill="#2a8ae0"/>
      <path d="M1 10 H33 V28 H1Z" fill="#f6e29a"/>
      <path d="M4 28 V17 Q4 15 6 15 H28 Q30 15 30 17 V28 H24.5 V20.5 H9.5 V28Z" fill="#8fd0f0" stroke="#5aa8d8" stroke-width="1"/></svg>
<div class="a" style="left:1562px;top:861px;width:58px;height:38px;border-radius:3px;border:1px solid rgba(200,200,215,0.55);background:linear-gradient(170deg,#b4b4c0 0,#6e6e80 22%,#36364a 50%,#232336 100%);overflow:hidden"><div class="a" style="left:-20px;top:18px;width:98px;height:30px;background:rgba(0,0,0,0.18);transform:rotate(-14deg)"></div></div>
<svg class="a" style="left:1575px;top:865px;" width="32" height="30" viewBox="0 0 32 30"><path d="M0 4 L18 0 V30 L0 26Z" fill="#0072c6"/><rect x="17" y="7" width="14" height="16" fill="#0072c6"/>
      <rect x="18.5" y="8.5" width="11.5" height="13" fill="#fff"/><path d="M18.5 9.5 L24.2 15 L30 9.5" fill="none" stroke="#0072c6" stroke-width="1.5"/>
      <ellipse cx="9" cy="15" rx="4.8" ry="5.8" fill="none" stroke="#fff" stroke-width="2.6"/></svg>
<div class="a" style="left:1624px;top:861px;width:51px;height:38px;border-radius:3px;border:1px solid rgba(200,200,215,0.55);background:linear-gradient(170deg,#b4b4c0 0,#6e6e80 22%,#36364a 50%,#232336 100%);overflow:hidden"><div class="a" style="left:-20px;top:18px;width:91px;height:30px;background:rgba(0,0,0,0.18);transform:rotate(-14deg)"></div></div>
<div class="a" style="left:1676px;top:862px;width:3px;height:37px;border:1px solid rgba(160,160,180,0.5);border-left:none;border-radius:0 3px 3px 0;background:#2a2b3c"></div>
<div class="a" style="left:1680px;top:862px;width:3px;height:37px;border:1px solid rgba(160,160,180,0.35);border-left:none;border-radius:0 3px 3px 0"></div>
<svg class="a" style="left:1634px;top:865px;" width="30" height="30" viewBox="0 0 30 30"><path d="M0 4 L17.5 0 V30 L0 26Z" fill="#2b579a"/><rect x="16.5" y="4" width="13" height="22" fill="#fff" stroke="#2b579a" stroke-width="1"/>
      <rect x="18.5" y="7.5" width="9" height="1.3" fill="#2b579a"/><rect x="18.5" y="10.5" width="9" height="1.3" fill="#2b579a"/><rect x="18.5" y="13.5" width="9" height="1.3" fill="#2b579a"/><rect x="18.5" y="16.5" width="9" height="1.3" fill="#2b579a"/><rect x="18.5" y="19.5" width="9" height="1.3" fill="#2b579a"/>
      <path d="M2.5 10 L5 20 L7.5 13 L10 20 L12.5 10" fill="none" stroke="#fff" stroke-width="2"/></svg>
<svg class="a" style="left:1700px;top:865px;" width="31" height="30" viewBox="0 0 31 30"><path d="M0 4 L18 0 V30 L0 26Z" fill="#1e7145"/><rect x="17" y="4" width="13" height="22" fill="#fff" stroke="#1e7145" stroke-width="1"/>
      <g fill="#1e7145"><rect x="19" y="7" width="4" height="2"/><rect x="24" y="7" width="4" height="2"/><rect x="19" y="10.5" width="4" height="2"/><rect x="24" y="10.5" width="4" height="2"/><rect x="19" y="14" width="4" height="2"/><rect x="24" y="14" width="4" height="2"/><rect x="19" y="17.5" width="4" height="2"/><rect x="24" y="17.5" width="4" height="2"/><rect x="19" y="21" width="4" height="2"/><rect x="24" y="21" width="4" height="2"/></g>
      <path d="M4 10 L12 20 M12 10 L4 20" stroke="#fff" stroke-width="2.3"/></svg>
<svg class="a" style="left:1762px;top:865px;" width="31" height="30" viewBox="0 0 31 30"><path d="M0 4 L18 0 V30 L0 26Z" fill="#d24726"/><rect x="17" y="5" width="13" height="21" fill="#fff" stroke="#d24726" stroke-width="1"/>
      <path d="M23.5 8 A4 4 0 1 0 27.5 12 H23.5Z" fill="#d24726"/><rect x="19" y="18" width="9" height="1.3" fill="#d24726"/><rect x="19" y="21" width="9" height="1.3" fill="#d24726"/>
      <path d="M5 21 V10 H9.5 A3 3 0 0 1 9.5 16 H5" fill="none" stroke="#fff" stroke-width="2.4"/></svg>
<div class="a" style="left:1810px;top:861px;width:53px;height:38px;border-radius:3px;border:1px solid rgba(200,200,215,0.55);background:linear-gradient(180deg,#d4d4da 0,#a9a9b2 35%,#7a7a84 60%,#8b8b94 100%);overflow:hidden"><div class="a" style="left:-20px;top:18px;width:93px;height:30px;background:rgba(0,0,0,0.18);transform:rotate(-14deg)"></div></div>
<div class="a" style="left:1864px;top:862px;width:4px;height:37px;border:1px solid rgba(200,200,215,0.55);border-left:none;border-radius:0 3px 3px 0;background:linear-gradient(180deg,#9a9aa4,#55555f)"></div>
<svg class="a" style="left:1820px;top:864px;" width="32" height="32" viewBox="0 0 32 32"><defs><linearGradient id="ieg" x1="0" y1="0" x2="0.3" y2="1"><stop offset="0" stop-color="#5cc8f5"/><stop offset="0.45" stop-color="#8fe6ff"/><stop offset="1" stop-color="#1e8ed8"/></linearGradient>
<mask id="iegm"><rect width="32" height="32" fill="#fff"/><path d="M10.6 13.4 A6.3 5.8 0 0 1 23.2 13.4Z" fill="#000"/><path d="M10.6 18.3 H32 V21.6 H22.5 A6.3 5.2 0 0 1 10.6 18.3Z" fill="#000"/></mask></defs>
<g mask="url(#iegm)"><circle cx="16.9" cy="15.8" r="13.2" fill="url(#ieg)" stroke="#1669b8" stroke-width="0.9"/></g>
<path d="M2.8 29.5 C1.5 23 11 9.5 23.5 3.6 C28 1.5 31.5 1.8 29.6 7.2" fill="none" stroke="#f6b31b" stroke-width="2.6"/>
<path d="M4.5 27 C5 22 12 12 22 6" fill="none" stroke="#ffe27a" stroke-width="0.9" opacity="0.8"/></svg>
<div class="a" style="left:1872px;top:861px;width:58px;height:38px;border-radius:3px;border:1px solid rgba(200,200,215,0.55);background:linear-gradient(170deg,#b4b4c0 0,#6e6e80 22%,#36364a 50%,#232336 100%);overflow:hidden"><div class="a" style="left:-20px;top:18px;width:98px;height:30px;background:rgba(0,0,0,0.18);transform:rotate(-14deg)"></div></div>
<svg class="a" style="left:1886px;top:865px;" width="32" height="31" viewBox="0 0 32 31"><path d="M0 4 L18 0 V30 L0 26Z" fill="#0072c6"/>
      <path d="M5.5 9 V21 H11.5" fill="none" stroke="#fff" stroke-width="2.4"/>
      <circle cx="24" cy="14" r="5" fill="none" stroke="#0072c6" stroke-width="4.2"/><circle cx="24" cy="14" r="5" fill="none" stroke="#fff" stroke-width="2.2"/><path d="M18.5 8 L22 7.5 L20.5 11Z" fill="#fff" stroke="#0072c6" stroke-width="0.6"/>
      <rect x="21" y="20.5" width="10.5" height="10" fill="#52d04e"/></svg>
<svg class="a" style="left:2626px;top:873px;" width="16" height="16" viewBox="0 0 16 16"><path d="M3 9 A5.5 5.5 0 0 1 12 3.5" fill="none" stroke="#6ad75a" stroke-width="2.6"/><path d="M13 7 A5.5 5.5 0 0 1 4 12.5" fill="none" stroke="#6ad75a" stroke-width="2.6"/><path d="M10 1 L14.5 4 L10.5 6.5Z M6 15 L1.5 12 L5.5 9.5Z" fill="#6ad75a"/></svg>
<svg class="a" style="left:2651px;top:873px;" width="16" height="16" viewBox="0 0 16 16"><path d="M0 2 L9 0 V16 L0 14Z" fill="#0072c6"/><rect x="8.5" y="4" width="7.5" height="8" fill="#0072c6"/><rect x="9.5" y="5" width="5.5" height="6" fill="#fff"/><path d="M9.5 5.5 L12.25 8 L15 5.5" fill="none" stroke="#0072c6"/><ellipse cx="4.5" cy="8" rx="2.3" ry="3" fill="none" stroke="#fff" stroke-width="1.4"/></svg>
<svg class="a" style="left:2675px;top:873px;" width="16" height="17" viewBox="0 0 16 17"><rect x="1.5" y="0.5" width="4.5" height="4" fill="#ccc"/><rect x="0.5" y="4" width="6.5" height="10" rx="1" fill="#888"/><rect x="3" y="14" width="1.5" height="3" fill="#777"/><circle cx="11.5" cy="12" r="4.5" fill="#1c9a24"/><path d="M9 12 L11 14.2 L14 9.5" fill="none" stroke="#fff" stroke-width="1.3"/></svg>
<svg class="a" style="left:2699px;top:873px;" width="16" height="16" viewBox="0 0 16 16"><rect x="0.5" y="0.5" width="15" height="15" fill="#f39c1e" stroke="#c87010"/><path d="M8 2.5 Q11 3.5 13 3.5 V8 Q13 11.5 8 14 Q3 11.5 3 8 V3.5 Q5 3.5 8 2.5Z" fill="#fff"/><path d="M8 3 V13.5 M3 7.5 H13" stroke="#f39c1e" stroke-width="1.2"/></svg>
<svg class="a" style="left:2724px;top:872px;" width="16" height="17" viewBox="0 0 16 17"><path d="M2 2 L4 4" stroke="#999"/><path d="M3 6 L8 2.5 L14 10 L9 13.5Z" fill="#aaa"/><path d="M9 13.5 L14 10 L15.5 12.5 L10.5 16Z" fill="#2233cc"/><rect x="11" y="12" width="2" height="2" fill="#fff"/></svg>
<svg class="a" style="left:2747px;top:873px;" width="16" height="16" viewBox="0 0 16 16"><path d="M1 1 V5 H4 V1 M2.5 5 V15" fill="none" stroke="#fff" stroke-width="1.1"/><rect x="4.5" y="3.5" width="11" height="9" fill="#1b1b22" stroke="#fff" stroke-width="1.1"/><path d="M8 15.5 H13 M10.5 12.5 V15.5" stroke="#fff" stroke-width="1.1"/></svg>
<svg class="a" style="left:2771px;top:873px;" width="15" height="16" viewBox="0 0 15 16"><path d="M1 5 H4 L8.5 1.5 V14.5 L4 11 H1Z" fill="#eee"/><path d="M10.5 5 Q12 8 10.5 11 M12.5 3 Q15 8 12.5 13" fill="none" stroke="#ddd" stroke-width="1"/></svg>
<div class="t" style="left:2808.70px;top:867.07px;font-family:'Liberation Sans';font-size:12.2px;color:#fff;font-weight:normal;transform:scaleX(0.9319);transform-origin:0 0;">4:27 PM</div>
<div class="t" style="left:2803.30px;top:882.97px;font-family:'Liberation Sans';font-size:12.2px;color:#fff;font-weight:normal;transform:scaleX(0.9588);transform-origin:0 0;">6/16/2015</div>
<div class="a" style="left:2865px;top:861px;width:15px;height:38px;border:1px solid rgba(170,170,190,0.6);border-right:none;background:linear-gradient(160deg,#5a5c6c 0,#2e3044 50%,#1e2036 100%)"></div>
</body></html>
